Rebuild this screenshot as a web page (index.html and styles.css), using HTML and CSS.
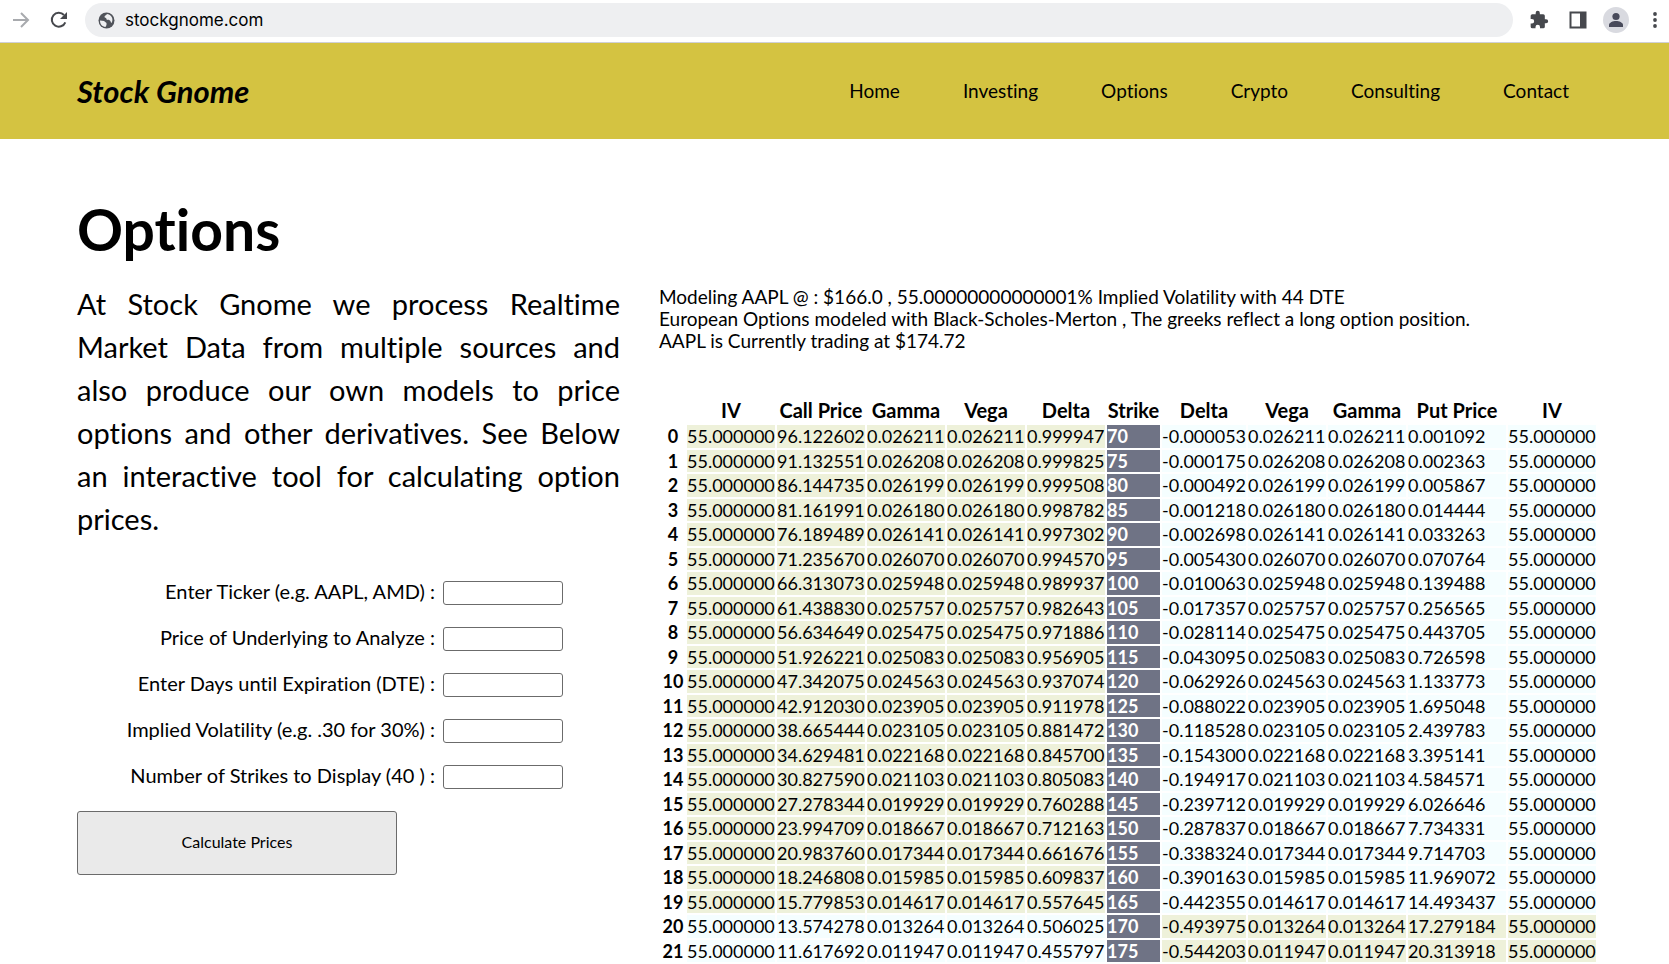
FILE: index.html
```html
<!DOCTYPE html>
<html lang="en">
<head>
<meta charset="utf-8">
<title>Stock Gnome - Options</title>
<link rel="stylesheet" href="styles.css">
</head>
<body>
<div class="toolbar">
  <button class="tool tool-forward" type="button" aria-label="Forward">
    <svg width="18" height="18" viewBox="0 0 18 18" fill="none" stroke="#a8aaae" stroke-width="2"><path d="M1 9h14M9 2l7 7-7 7"/></svg>
  </button>
  <button class="tool tool-reload" type="button" aria-label="Reload">
    <svg width="18" height="18" viewBox="0 0 18 18"><path d="M15.300 11.300A7 7 0 1 1 14 4" fill="none" stroke="#46484d" stroke-width="2"/><path d="M17 1v7h-7z" fill="#46484d"/></svg>
  </button>
  <div class="address">
    <svg width="17" height="17" viewBox="0 0 17 17"><circle cx="8.500" cy="8.500" r="8" fill="#50535a"/><path d="M2 8.500l4 .5 2.500 2v2l-1 2C4 14.500 2 12 2 8.500zM9 2c-1 1.500-2.500 1.500-2.500 3 0 1 2 .6 2 2 0 1.500 2.500.5 3.500 1.500s.5 2 1.500 2.500c1.800-2.500 1.500-8-4.500-9z" fill="#eeeff1"/></svg>
    <input class="address-input" type="text" aria-label="Address" value="stockgnome.com">
  </div>
  <button class="tool tool-ext" type="button" aria-label="Extensions">
    <svg width="20" height="20" viewBox="0 0 24 24" fill="#46484d"><path d="M20.500 11H19V7a2 2 0 0 0-2-2h-4V3.500a2.500 2.500 0 0 0-5 0V5H4a2 2 0 0 0-2 2v3.800h1.500a2.700 2.700 0 0 1 0 5.400H2V20a2 2 0 0 0 2 2h3.800v-1.500a2.700 2.700 0 0 1 5.400 0V22H17a2 2 0 0 0 2-2v-4h1.500a2.500 2.500 0 0 0 0-5z"/></svg>
  </button>
  <button class="tool tool-panel" type="button" aria-label="Side panel">
    <svg width="18" height="18" viewBox="0 0 18 18"><path d="M1.500 1.500h15v15h-15z" fill="none" stroke="#46484d" stroke-width="2"/><path d="M11 1h6v16h-6z" fill="#46484d"/></svg>
  </button>
  <button class="tool tool-profile" type="button" aria-label="Profile">
    <svg width="26" height="26" viewBox="0 0 26 26"><circle cx="13" cy="13" r="13" fill="#d9dae0"/><circle cx="13" cy="9.500" r="3.600" fill="#484a5a"/><path d="M6 20v-2c0-2.500 4-4 7-4s7 1.500 7 4v2z" fill="#484a5a"/></svg>
  </button>
  <button class="tool tool-menu" type="button" aria-label="Menu">
    <svg width="4" height="18" viewBox="0 0 4 18" fill="#46484d"><circle cx="2" cy="3" r="1.900"/><circle cx="2" cy="9" r="1.900"/><circle cx="2" cy="15" r="1.900"/></svg>
  </button>
</div>

<header class="site-header">
  <a class="logo" href="#">Stock Gnome</a>
  <nav class="nav">
    <a href="#">Home</a>
    <a href="#">Investing</a>
    <a href="#">Options</a>
    <a href="#">Crypto</a>
    <a href="#">Consulting</a>
    <a href="#">Contact</a>
  </nav>
</header>

<main class="page">
  <h1 class="title">Options</h1>
  <div class="columns">
    <section class="intro">
      <p class="lead">At Stock Gnome we process Realtime Market Data from multiple sources and also produce our own models to price options and other derivatives. See Below an interactive tool for calculating option prices.</p>
      <form class="form">
        <div class="field"><label for="ticker">Enter Ticker (e.g. AAPL, AMD) :</label><input id="ticker" type="text"></div>
        <div class="field"><label for="price">Price of Underlying to Analyze :</label><input id="price" type="text"></div>
        <div class="field"><label for="dte">Enter Days until Expiration (DTE) :</label><input id="dte" type="text"></div>
        <div class="field"><label for="vol">Implied Volatility (e.g. .30 for 30%) :</label><input id="vol" type="text"></div>
        <div class="field"><label for="strikes">Number of Strikes to Display (40 ) :</label><input id="strikes" type="text"></div>
        <button class="submit" type="button">Calculate Prices</button>
      </form>
    </section>
    <section class="model">
      <p class="summary">Modeling AAPL @ : $166.0 , 55.00000000000001% Implied Volatility with 44 DTE<br>European Options modeled with Black-Scholes-Merton , The greeks reflect a long option position.<br>AAPL is Currently trading at $174.72</p>
      <table class="chain">
        <colgroup><col class="c-index"><col class="c-price"><col class="c-price"><col class="c-greek"><col class="c-greek"><col class="c-greek"><col class="c-strike"><col class="c-delta"><col class="c-greek"><col class="c-greek"><col class="c-put"><col class="c-price"></colgroup>
        <thead>
          <tr><td></td><th scope="col">IV</th><th scope="col">Call Price</th><th scope="col">Gamma</th><th scope="col">Vega</th><th scope="col">Delta</th><th scope="col">Strike</th><th scope="col">Delta</th><th scope="col">Vega</th><th scope="col">Gamma</th><th scope="col">Put Price</th><th scope="col">IV</th></tr>
        </thead>
        <tbody id="chain-body"></tbody>
      </table>
    </section>
  </div>
</main>
<script src="chain.js"></script>
</body>
</html>
```

FILE: styles.css
```css
* { box-sizing: border-box; }

body {
  margin: 0;
  background: #fff;
  color: #000;
  font-family: "Trebuchet MS", Lato, "Open Sans", sans-serif;
  font-size: 19px;
  font-variant-ligatures: none;
  line-height: 22px;
}

button, input { font-family: inherit; color: inherit; }
a { color: inherit; text-decoration: none; }

.toolbar {
  display: flex;
  align-items: center;
  height: 43px;
  padding: 0 12px;
  padding-bottom: 2px;
  border-bottom: 1px solid #cfd0d6;
}

.tool {
  display: flex;
  flex: none;
  padding: 0;
  border: 0;
  background: none;
}

.tool-reload { margin-left: 20px; }
.tool-ext { margin-left: 16px; }
.tool-panel { margin-left: 20px; }
.tool-profile { margin-left: 16px; }
.tool-menu { margin-left: 24px; }

.address {
  display: flex;
  flex: 1;
  align-items: center;
  gap: 10px;
  height: 34px;
  margin-left: 17px;
  padding: 0 13px;
  border-radius: 17px;
  background: #eeeff1;
}

.address-input {
  flex: 1;
  padding: 0;
  border: 0;
  background: none;
  font-family: Inter, "Liberation Sans", sans-serif;
  font-size: 17px;
}

.site-header {
  display: flex;
  align-items: center;
  justify-content: space-between;
  height: 96px;
  padding: 0 100px 0 77px;
  background: #d4c341;
}

.logo {
  font-size: 31px;
  font-style: italic;
  font-weight: 700;
  line-height: 36px;
}

.nav { display: flex; gap: 63px; }

.page { padding: 54px 69px 0 77px; }

.title {
  margin: 0;
  font-size: 57px;
  font-weight: 700;
  line-height: 72px;
}

.columns {
  display: grid;
  grid-template-columns: 543fr 941fr;
  gap: 39px;
  padding-top: 17px;
}

.lead {
  margin: 0;
  font-size: 29px;
  line-height: 43px;
  text-align: justify;
}

.form { padding-top: 41px; }

.field {
  display: flex;
  align-items: center;
  gap: 8px;
  height: 24px;
  margin-bottom: 22px;
}

.field label {
  flex: 0 0 358px;
  padding-bottom: 4px;
  font-size: 20px;
  text-align: right;
}

.field input {
  width: 120px;
  height: 24px;
  border: 1px solid #6b6b6b;
  border-radius: 3px;
  background: #fff;
}

.submit {
  width: 320px;
  height: 64px;
  padding: 0 0 4px;
  border: 1px solid #6b6b6b;
  border-radius: 3px;
  background: #eaeaea;
  font-size: 16px;
}

.summary { margin: 0; padding-top: 4px; }

.chain {
  margin-top: 44px;
  border-spacing: 2px;
  font-size: 18px;
  line-height: 1.25;
  white-space: nowrap;
}

.chain thead { font-size: 20px; }
.chain th, .chain td { padding: 0; }
.chain tbody td { background: #f5feff; }
.chain tbody .itm { background: #eef1da; }
.chain tbody .strike { background: #6f7385; color: #fff; font-weight: 700; }

.c-index { width: 24px; }
.c-price { width: 88px; }
.c-greek { width: 78px; }
.c-strike { width: 53px; }
.c-delta { width: 84px; }
.c-put { width: 98px; }
```

FILE: chain.js
```js
// strike, call price, gamma/vega, call delta, put delta, put price
const rows = [
  [70, "96.122602", "0.026211", "0.999947", "-0.000053", "0.001092"],
  [75, "91.132551", "0.026208", "0.999825", "-0.000175", "0.002363"],
  [80, "86.144735", "0.026199", "0.999508", "-0.000492", "0.005867"],
  [85, "81.161991", "0.026180", "0.998782", "-0.001218", "0.014444"],
  [90, "76.189489", "0.026141", "0.997302", "-0.002698", "0.033263"],
  [95, "71.235670", "0.026070", "0.994570", "-0.005430", "0.070764"],
  [100, "66.313073", "0.025948", "0.989937", "-0.010063", "0.139488"],
  [105, "61.438830", "0.025757", "0.982643", "-0.017357", "0.256565"],
  [110, "56.634649", "0.025475", "0.971886", "-0.028114", "0.443705"],
  [115, "51.926221", "0.025083", "0.956905", "-0.043095", "0.726598"],
  [120, "47.342075", "0.024563", "0.937074", "-0.062926", "1.133773"],
  [125, "42.912030", "0.023905", "0.911978", "-0.088022", "1.695048"],
  [130, "38.665444", "0.023105", "0.881472", "-0.118528", "2.439783"],
  [135, "34.629481", "0.022168", "0.845700", "-0.154300", "3.395141"],
  [140, "30.827590", "0.021103", "0.805083", "-0.194917", "4.584571"],
  [145, "27.278344", "0.019929", "0.760288", "-0.239712", "6.026646"],
  [150, "23.994709", "0.018667", "0.712163", "-0.287837", "7.734331"],
  [155, "20.983760", "0.017344", "0.661676", "-0.338324", "9.714703"],
  [160, "18.246808", "0.015985", "0.609837", "-0.390163", "11.969072"],
  [165, "15.779853", "0.014617", "0.557645", "-0.442355", "14.493437"],
  [170, "13.574278", "0.013264", "0.506025", "-0.493975", "17.279184"],
  [175, "11.617692", "0.011947", "0.455797", "-0.544203", "20.313918"]
];
const spot = 166;
const iv = "55.000000";
const cells = (values, itm) =>
  values.map(v => `<td${itm ? ' class="itm"' : ""}>${v}</td>`).join("");

document.getElementById("chain-body").innerHTML = rows.map(
  ([strike, call, greek, callDelta, putDelta, put], i) =>
    `<tr><th scope="row">${i}</th>` +
    cells([iv, call, greek, greek, callDelta], strike < spot) +
    `<td class="strike">${strike}</td>` +
    cells([putDelta, greek, greek, put, iv], strike > spot) +
    "</tr>"
).join("");
```
